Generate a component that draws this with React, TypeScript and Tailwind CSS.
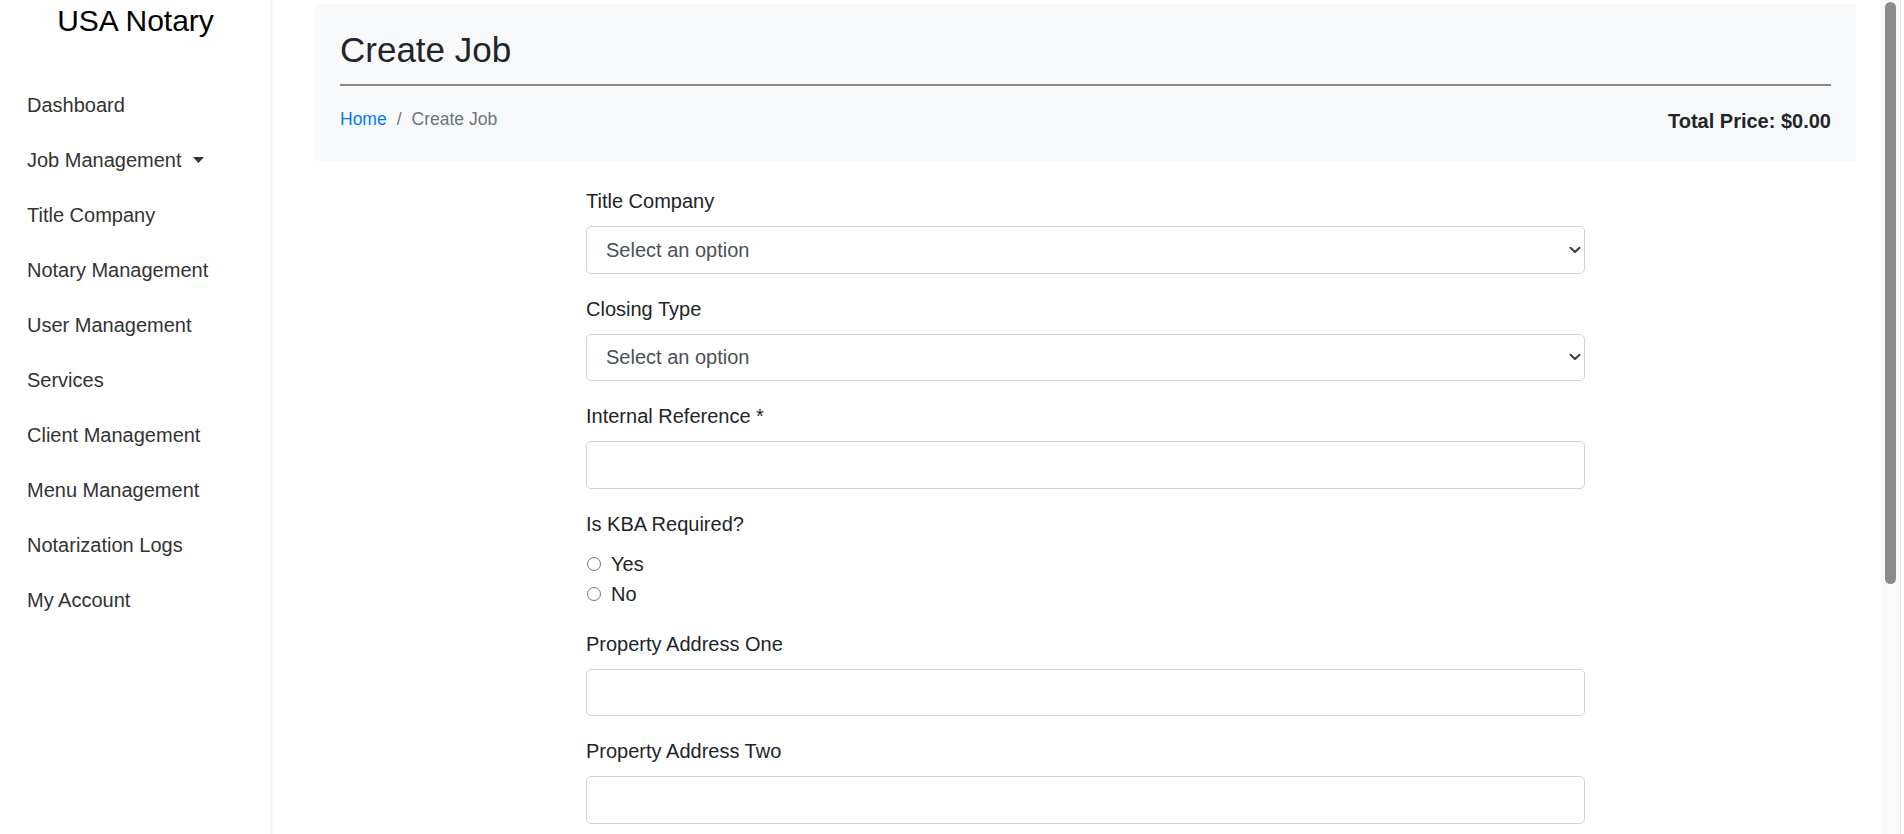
import React from "react";

const navItems = [
  "Dashboard",
  "Job Management",
  "Title Company",
  "Notary Management",
  "User Management",
  "Services",
  "Client Management",
  "Menu Management",
  "Notarization Logs",
  "My Account",
];

function Chevron() {
  return (
    <svg width="12" height="8" viewBox="0 0 12 8" fill="none">
      <path d="M1.5 1.8 L6 6 L10.5 1.8" stroke="#3a3a3a" strokeWidth="2" strokeLinecap="round" strokeLinejoin="round" />
    </svg>
  );
}

function SelectBox() {
  return (
    <div className="h-[47.5px] w-full rounded-[5px] border border-[#ced4da] bg-white flex items-center justify-between pl-[19px] pr-[3px]">
      <span className="text-[20px] text-[#495057]">Select an option</span>
      <Chevron />
    </div>
  );
}

function InputBox() {
  return <div className="h-[47.5px] w-full rounded-[5px] border border-[#ced4da] bg-white" />;
}

function Label({ children }: { children: React.ReactNode }) {
  return <div className="text-[20px] leading-[30px] text-[#212529] mb-[10px]">{children}</div>;
}

function Radio({ label }: { label: string }) {
  return (
    <div className="flex items-center h-[30px]">
      <span className="w-[14px] h-[14px] rounded-full border border-[#767676] bg-white ml-[1px]" />
      <span className="ml-[10px] text-[20px] text-[#212529]">{label}</span>
    </div>
  );
}

export default function App() {
  return (
    <div
      className="flex h-[834px] w-full overflow-hidden bg-white"
      style={{ fontFamily: '"Liberation Sans", Arial, sans-serif' }}
    >
      {/* Sidebar */}
      <aside className="w-[272px] shrink-0 h-full bg-white border-r border-[#f1f1f1] shadow-[1px_0_4px_rgba(0,0,0,0.05)] relative z-10">
        <div className="h-[77px] pt-[3px] text-center">
          <span className="text-[30px] leading-[36px] text-black">USA Notary</span>
        </div>
        <nav className="flex flex-col">
          {navItems.map((item) => (
            <div key={item} className="h-[55px] flex items-center pl-[27px] text-[20px] text-[#333333]">
              <span>{item}</span>
              {item === "Job Management" && (
                <svg className="ml-[11px] mt-[1px]" width="11" height="6" viewBox="0 0 11 6">
                  <polygon points="0,0 11,0 5.5,6" fill="#333333" />
                </svg>
              )}
            </div>
          ))}
        </nav>
      </aside>

      {/* Main */}
      <main className="flex-1 min-w-0 h-full">
        <div className="ml-[43px] mr-[25px] mt-[4px]">
          <div className="bg-[#f8f9fa] px-[25px] pt-[25px] pb-[25px]">
            <h1 className="text-[35px] leading-[42px] text-[#212529]">Create Job</h1>
            <div className="mt-[13px] h-[2px] bg-[#888888]" />
            <div className="mt-[20px] flex justify-between items-start">
              <div className="text-[17.5px] leading-[26px] flex items-center">
                <span className="text-[#007bff]">Home</span>
                <span className="text-[#6c757d] px-[10px]">/</span>
                <span className="text-[#6c757d]">Create Job</span>
              </div>
              <div className="text-[20px] leading-[30px] font-bold text-[#212529]">Total Price: $0.00</div>
            </div>
          </div>

          <div className="w-[999px] mx-auto mt-[25px]">
            <div className="mb-[20px]">
              <Label>Title Company</Label>
              <SelectBox />
            </div>
            <div className="mb-[20px]">
              <Label>Closing Type</Label>
              <SelectBox />
            </div>
            <div className="mb-[20px]">
              <Label>Internal Reference *</Label>
              <InputBox />
            </div>
            <div className="mb-[20px]">
              <Label>Is KBA Required?</Label>
              <Radio label="Yes" />
              <Radio label="No" />
            </div>
            <div className="mb-[20px]">
              <Label>Property Address One</Label>
              <InputBox />
            </div>
            <div className="mb-[20px]">
              <Label>Property Address Two</Label>
              <InputBox />
            </div>
          </div>
        </div>
      </main>

      {/* Scrollbar */}
      <div className="w-[23px] shrink-0 h-full flex">
        <div className="w-[19px] h-full bg-[#fafafa] pl-[4px] pt-[2px]">
          <div className="w-[11px] h-[582px] rounded-full bg-[#8b8b8b]" />
        </div>
        <div className="w-[1px] h-full bg-[#e8e8e8]" />
        <div className="flex-1 h-full bg-[#fdfdfd]" />
      </div>
    </div>
  );
}
